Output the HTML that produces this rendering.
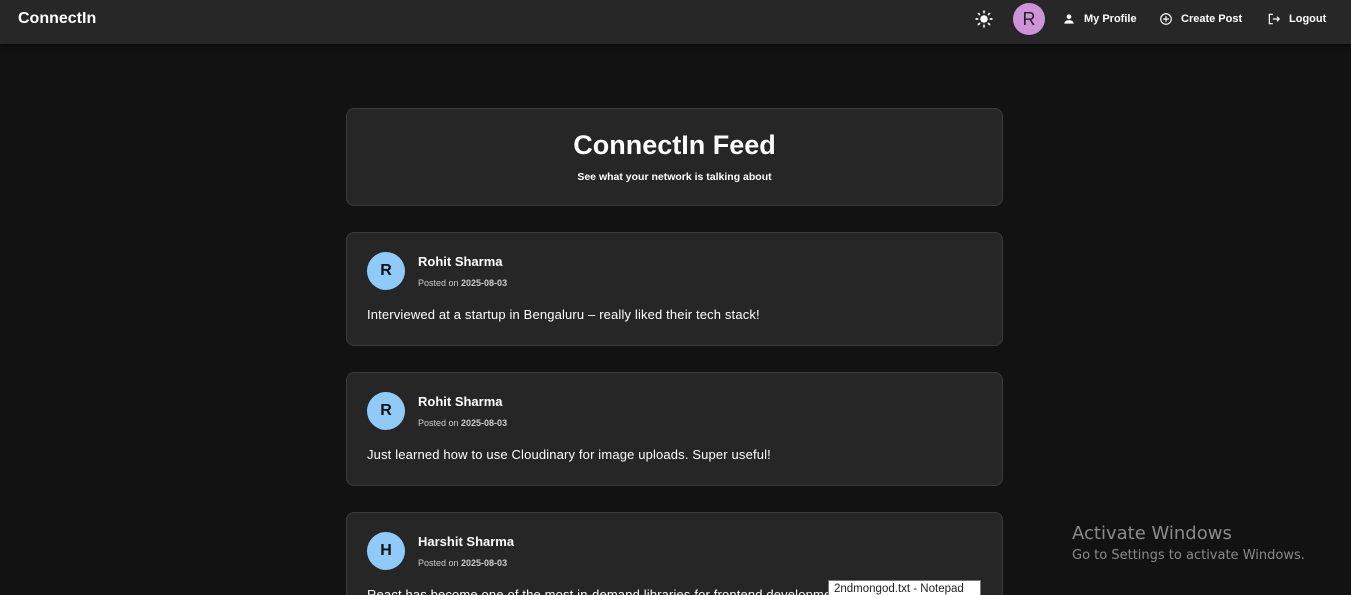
<!DOCTYPE html>
<html><head><style>
*{box-sizing:border-box;margin:0;padding:0}
html{width:1351px;height:595px;overflow:hidden}
body{width:1351px;height:595px;overflow:hidden;background:#121212;font-family:"Liberation Sans",Arial,sans-serif;color:#fff;position:relative}
.nav{position:absolute;left:0;top:0;width:1351px;height:44px;background:#272727;box-shadow:0 2px 4px rgba(0,0,0,.5)}
.logo{position:absolute;left:18px;top:10px;font-size:16px;font-weight:bold}
.ni{position:absolute;top:12px;font-size:11px;font-weight:bold;display:flex;align-items:center;gap:8px}
.av{position:absolute;left:1013px;top:3px;width:32px;height:32px;border-radius:50%;background:#ce93d8;color:#222;font-size:18px;text-align:center;line-height:32px}
.card{position:absolute;left:346px;width:657px;background:#262626;border:1px solid #3a3a3a;border-radius:8px}
.hdr{top:108px;height:98px;text-align:center}
.hdr h1{font-size:27px;margin-top:21px}
.hdr p{font-size:10.5px;font-weight:bold;margin-top:10px}
.post{height:114px}
.pa{position:absolute;left:20px;top:19px;width:38px;height:38px;border-radius:50%;background:#90caf9;color:#111;font-weight:bold;font-size:16px;text-align:center;line-height:38px}
.pn{position:absolute;left:71px;top:21px;font-size:13px;font-weight:bold}
.pd{position:absolute;left:71px;top:45px;font-size:9px;color:#ccc}
.pt{position:absolute;left:20px;top:74px;font-size:13px;letter-spacing:0.15px}
.win{position:absolute;left:1072px;top:523px;color:#8a8a8a;font-family:"DejaVu Sans",sans-serif}
.tip{position:absolute;left:828px;top:580px;width:153px;background:#fff;color:#222;font-size:11.5px;padding:2px 5px;border:1px solid #777;height:20px;white-space:nowrap}
</style></head><body>
<div class="nav">
<div class="logo">ConnectIn</div>
<svg style="position:absolute;left:975px;top:10px" width="18" height="18" viewBox="0 0 24 24" fill="#fff"><circle cx="12" cy="12" r="5"/><g stroke="#fff" stroke-width="2.2" stroke-linecap="round"><path d="M12 1.5v2M12 20.5v2M1.5 12h2M20.5 12h2M4.6 4.6l1.4 1.4M18 18l1.4 1.4M4.6 19.4L6 18M18 6l1.4-1.4"/></g></svg>
<div class="av">R</div>
<div class="ni" style="left:1062px"><svg width="14" height="14" viewBox="0 0 24 24" fill="#fff"><circle cx="12" cy="8" r="4"/><path d="M4 20c0-4 4-6 8-6s8 2 8 6z"/></svg>My Profile</div>
<div class="ni" style="left:1159px"><svg width="14" height="14" viewBox="0 0 24 24" fill="none" stroke="#fff" stroke-width="2"><circle cx="12" cy="12" r="9"/><path d="M12 7v10M7 12h10"/></svg>Create Post</div>
<div class="ni" style="left:1267px"><svg width="14" height="14" viewBox="0 0 24 24" fill="none" stroke="#fff" stroke-width="2"><path d="M10 4H4v16h6M10 12h11M17 8l4 4-4 4"/></svg>Logout</div>
</div>
<div class="card hdr"><h1>ConnectIn Feed</h1><p>See what your network is talking about</p></div>
<div class="card post" style="top:232px"><div class="pa">R</div><div class="pn">Rohit Sharma</div><div class="pd">Posted on <b>2025-08-03</b></div><div class="pt">Interviewed at a startup in Bengaluru – really liked their tech stack!</div></div>
<div class="card post" style="top:372px"><div class="pa">R</div><div class="pn">Rohit Sharma</div><div class="pd">Posted on <b>2025-08-03</b></div><div class="pt">Just learned how to use Cloudinary for image uploads. Super useful!</div></div>
<div class="card post" style="top:512px;height:100px"><div class="pa">H</div><div class="pn">Harshit Sharma</div><div class="pd">Posted on <b>2025-08-03</b></div><div class="pt">React has become one of the most in-demand libraries for frontend development.</div></div>
<div class="win"><div style="font-size:18px">Activate Windows</div><div style="font-size:13px;margin-top:4px">Go to Settings to activate Windows.</div></div>
<div class="tip">2ndmongod.txt - Notepad</div>
</body></html>
